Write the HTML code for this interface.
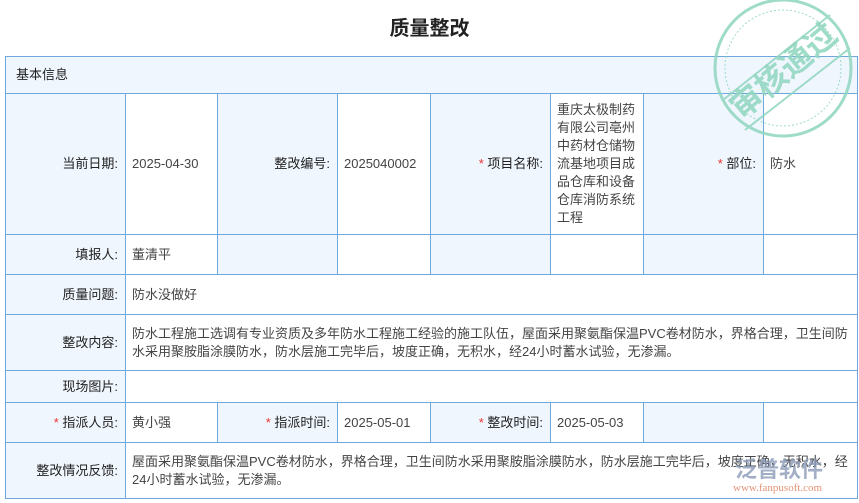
<!DOCTYPE html><html><head><meta charset="utf-8"><style>
body{margin:0;width:859px;height:503px;background:#fff;font-family:"Liberation Sans","Noto Sans CJK SC",sans-serif;font-size:13px;color:#444;position:relative;overflow:hidden}
h1{position:absolute;top:12px;left:0;width:859px;text-align:center;margin:0;font-size:20px;font-weight:bold;color:#222}
table{position:absolute;left:5px;top:56px;border-collapse:collapse;table-layout:fixed;width:852px}
td{border:1px solid #6fa8dc;padding:0 6px;line-height:18px;vertical-align:middle}
td.l{background:#eff6fe;text-align:right;padding-right:7px;color:#222}
td.h{background:#eff6fe;padding-left:10px;color:#222}
.s{color:#e33}
</style></head><body>
<h1>质量整改</h1>
<table>
<colgroup><col style="width:120px"><col style="width:92px"><col style="width:120px"><col style="width:93px"><col style="width:120px"><col style="width:93px"><col style="width:120px"><col style="width:94px"></colgroup>
<tr style="height:37px"><td class="h" colspan="8">基本信息</td></tr>
<tr style="height:141px"><td class="l">当前日期:</td><td>2025-04-30</td><td class="l">整改编号:</td><td>2025040002</td><td class="l"><span class="s">*</span> 项目名称:</td><td>重庆太极制药有限公司亳州中药材仓储物流基地项目成品仓库和设备仓库消防系统工程</td><td class="l"><span class="s">*</span> 部位:</td><td>防水</td></tr>
<tr style="height:40px"><td class="l">填报人:</td><td>董清平</td><td class="l"></td><td></td><td class="l"></td><td></td><td class="l"></td><td></td></tr>
<tr style="height:40px"><td class="l">质量问题:</td><td colspan="7">防水没做好</td></tr>
<tr style="height:56px"><td class="l">整改内容:</td><td colspan="7">防水工程施工选调有专业资质及多年防水工程施工经验的施工队伍，屋面采用聚氨酯保温PVC卷材防水，界格合理，卫生间防水采用聚胺脂涂膜防水，防水层施工完毕后，坡度正确，无积水，经24小时蓄水试验，无渗漏。</td></tr>
<tr style="height:32px"><td class="l">现场图片:</td><td colspan="7"></td></tr>
<tr style="height:40px"><td class="l"><span class="s">*</span> 指派人员:</td><td>黄小强</td><td class="l"><span class="s">*</span> 指派时间:</td><td>2025-05-01</td><td class="l"><span class="s">*</span> 整改时间:</td><td>2025-05-03</td><td class="l"></td><td></td></tr>
<tr style="height:56px"><td class="l">整改情况反馈:</td><td colspan="7">屋面采用聚氨酯保温PVC卷材防水，界格合理，卫生间防水采用聚胺脂涂膜防水，防水层施工完毕后，坡度正确，无积水，经24小时蓄水试验，无渗漏。</td></tr>
</table>
<svg style="position:absolute;left:705px;top:0" width="154" height="145" viewBox="0 0 154 145">
<g fill="none" stroke="#8fd6bf" opacity="0.85">
<circle cx="78" cy="68" r="68" stroke-width="3"/>
<circle cx="78" cy="68" r="58" stroke-width="1" stroke-dasharray="2 2"/>
<line x1="18" y1="100" x2="125" y2="15" stroke-width="2"/>
<line x1="40" y1="130" x2="145" y2="48" stroke-width="2"/>
</g>
<text x="78" y="82" text-anchor="middle" transform="rotate(-40 78 70)" font-family="Noto Sans CJK SC,sans-serif" font-weight="bold" font-size="32" fill="#8fd6bf" opacity="0.85">审核通过</text>
</svg>
<div style="position:absolute;left:735px;top:452px;font-size:22px;font-weight:bold;color:#8a9bb8;opacity:.8">泛普软件</div>
<div style="position:absolute;left:733px;top:482px;font-size:11px;font-family:'Liberation Serif',serif;color:#e0886a;opacity:.9">www.fanpusoft.com</div>
</body></html>
